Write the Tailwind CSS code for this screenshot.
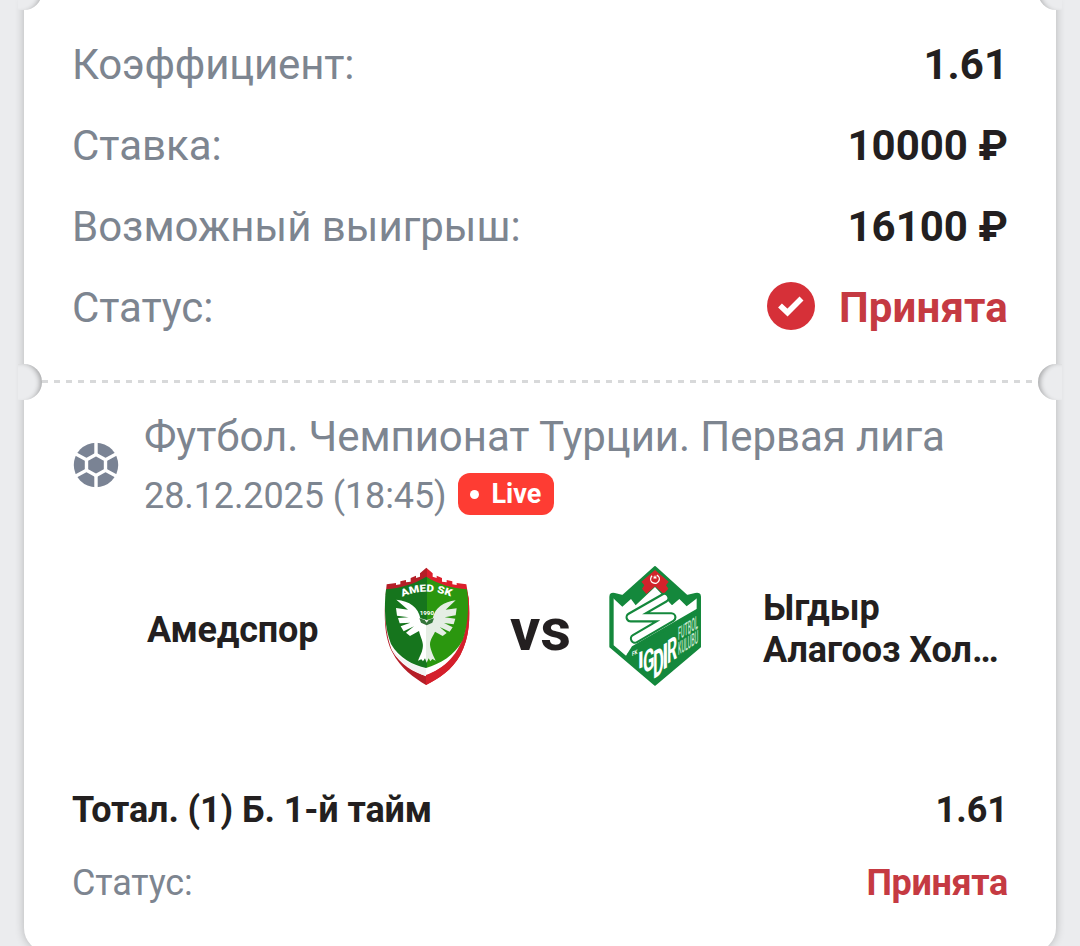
<!DOCTYPE html>
<html lang="ru">
<head>
    <meta charset="UTF-8">
    <meta name="viewport" content="width=device-width, initial-scale=1.0">
    <title>Купон</title>
    <script src="https://cdn.jsdelivr.net/npm/@tailwindcss/browser@4"></script>
</head>
<body class="bg-[#ebecee] font-[Roboto,sans-serif] text-[#231f20] h-[946px] overflow-hidden">
    <main class="relative mx-6 h-[952px] bg-white rounded-b-3xl shadow-[0_0_10px_rgba(0,0,0,0.24)]">
        <!-- Ticket notches -->
        <div class="absolute -left-1.5 -top-[26px] w-6 h-9 overflow-hidden">
            <div class="-ml-10 w-16 h-9 rounded-full bg-[#ebecee] shadow-[inset_-5px_0_5px_-3px_rgba(0,0,0,0.24)]"></div>
        </div>
        <div class="absolute -right-1.5 -top-[26px] w-6 h-9 overflow-hidden">
            <div class="w-16 h-9 rounded-full bg-[#ebecee] shadow-[inset_5px_0_5px_-3px_rgba(0,0,0,0.24)]"></div>
        </div>
        <div class="absolute -left-1.5 top-[364px] w-6 h-9 overflow-hidden">
            <div class="-ml-10 w-16 h-9 rounded-full bg-[#ebecee] shadow-[inset_-5px_1px_5px_-3px_rgba(0,0,0,0.3)]"></div>
        </div>
        <div class="absolute -right-1.5 top-[364px] w-6 h-9 overflow-hidden">
            <div class="w-16 h-9 rounded-full bg-[#ebecee] shadow-[inset_5px_1px_5px_-3px_rgba(0,0,0,0.3)]"></div>
        </div>

        <!-- Summary -->
        <section class="px-12 pt-6 text-[42px] leading-[81px]">
            <div class="flex justify-between">
                <span class="text-[#7d8590] tracking-[-0.15px]">Коэффициент:</span>
                <span class="font-bold">1.61</span>
            </div>
            <div class="flex justify-between">
                <span class="text-[#7d8590]">Ставка:</span>
                <span class="font-bold">10000 ₽</span>
            </div>
            <div class="flex justify-between">
                <span class="text-[#7d8590]">Возможный выигрыш:</span>
                <span class="font-bold">16100 ₽</span>
            </div>
            <div class="flex justify-between">
                <span class="text-[#7d8590] tracking-[-0.1px]">Статус:</span>
                <span class="flex items-center gap-6 font-bold text-[#c53a42]">
                    <svg class="size-12 -mt-1" viewBox="0 0 48 48">
                        <circle cx="24" cy="24" r="24" fill="#d63038"/>
                        <path d="M13 23.500l7.500 7L34.500 16.500" fill="none" stroke="#fff" stroke-width="5.600"/>
                    </svg>
                    <span class="tracking-[0.15px]">Принята</span>
                </span>
            </div>
        </section>

        <!-- Tear line -->
        <div class="mt-[32px] mx-[18px] h-[3px] bg-[repeating-linear-gradient(90deg,#d8d9da_0_6px,transparent_6px_12px)]"></div>

        <!-- Event -->
        <section class="px-12 pt-[27px] text-[#7d8590]">
            <div class="flex items-start gap-6">
                <svg class="size-12 shrink-0 mt-[31px]" viewBox="0 0 48 48">
                    <circle cx="24" cy="24" r="22.200" fill="#7a8394"/>
                    <g fill="none" stroke="#fff" stroke-width="3.400">
                        <path d="M24 13.500L33.500 18.800V29.200L24 34.500L14.500 29.200V18.800Z"/>
                        <path d="M24 0V13.500M24 34.500V48M33.500 18.800L46 12M33.500 29.200L46 36M14.500 18.800L2 12M14.500 29.200L2 36"/>
                    </g>
                </svg>
                <div>
                    <div class="text-[42px] leading-[54px] whitespace-nowrap tracking-[-0.07px]">Футбол. Чемпионат Турции. Первая лига</div>
                    <div class="flex items-center h-[64px] text-[36px]">
                        <span class="tracking-[-0.1px]">28.12.2025 (18:45)</span>
                        <span class="ml-3 -mt-1 flex items-center gap-3 w-24 h-[42px] pl-3 rounded-xl bg-[#fe3c33] text-white text-[27px] leading-none font-bold">
                            <i class="size-[9px] rounded-full bg-white"></i>Live
                        </span>
                    </div>
                </div>
            </div>
        </section>

        <!-- Teams -->
        <section class="flex items-center h-[140px] mt-[27px] px-12 text-[36px] leading-[42px] font-bold">
            <div class="w-[298px] pl-[75px] pt-2.5 tracking-[-0.2px]">Амедспор</div>
            <svg class="w-[115px] h-[140px] shrink-0" viewBox="0 0 345 420">
                <defs>
                    <linearGradient id="red" x1="0" x2="1"><stop offset=".5" stop-color="#b51e27"/><stop offset=".5" stop-color="#dc1f2c"/></linearGradient>
                    <linearGradient id="green" x1="0" x2="1"><stop offset=".5" stop-color="#16751d"/><stop offset=".5" stop-color="#2b970f"/></linearGradient>
                    <linearGradient id="wing" x1="0" x2="1"><stop offset=".5" stop-color="#fff"/><stop offset=".5" stop-color="#e5eee4"/></linearGradient>
                    <path id="arc" d="M97 126Q170 94 245 126"/>
                </defs>
                <path fill="url(#red)" d="M169 38L188 55V65L200 69V62L216 69V80L230 82V75L247 79V88L260 90V84L289 88L296 130C300 190 300 245 271 300C247 345 205 371 168 390C132 369 91 340 67 292C42 243 40 180 50 88L78 84V90L91 88V79L108 75V82L122 80V69L138 62V69L150 65V55z"/>
                <path fill="#fff" d="M46 120C43 190 48 240 65 284C90 330 132 352 168 363C207 344 251 320 276 270C290 220 293 170 290 120z"/>
                <path fill="#f3f3f3" d="M62 276C84 312 130 331 168 341V364C130 349 80 320 62 276z"/>
                <path fill="#d41f2b" d="M168 360C222 342 269 300 287 220C294 170 292 130 290 105L296 130C300 190 300 245 271 300C247 345 205 371 168 390z"/>
                <path fill="url(#green)" d="M169 65C132 87 92 99 48 103C41 158 45 223 63 267C87 309 130 331 168 339C210 327 253 303 278 256C294 210 298 155 291 103C248 99 209 90 169 65z"/>
                <path fill="url(#wing)" d="M151 190C145 157 119 138 79 134L114 164L78 159L81 182L116 187L84 189L89 205L121 203L92 214L101 229L132 214L108 233L120 243L147 228C151 247 162 262 158 280C156 295 148 305 144 317L154 313L159 319L165 310L170 323L176 310L181 319L187 312L197 317C187 296 180 280 180 268C180 254 189 244 195 230L218 243L230 234L209 216L239 230L248 217L222 204L251 208L256 191L224 187L257 181L260 160L227 164L257 136C222 141 195 157 188 190L170 195z"/>
                <path fill="#35753a" d="M148 190l16 5l6 8l6-8l16-5l-5 13l-17 8l-17-8z"/>
                <text font-size="30" font-weight="900" fill="#fff"><textPath href="#arc" textLength="150" lengthAdjust="spacingAndGlyphs">AMED SK</textPath></text>
                <text x="149" y="181" font-size="14" fill="#fff" textLength="43" lengthAdjust="spacingAndGlyphs">1990</text>
            </svg>
            <div class="w-[110px] text-center text-[60px] pt-2.5 pl-px">vs</div>
            <svg class="w-[120px] h-[140px] shrink-0" viewBox="0 0 360 420">
                <path fill="#14883c" stroke="#14883c" stroke-width="6" stroke-linejoin="round" d="M180 36L276 123L301 117Q315 114 315 125V275L180 389L46 275V125Q46 114 59 117L83 123z"/>
                <path fill="#fff" d="M53 128L82 155L108 132L122 151L180 96L231 151L253 132L275 154L306 130V161L111 274L92 304L53 270z"/>
                <path fill="#d2232b" d="M180 45L221 80L213 91L220 101L206 117L180 94L154 117L141 101L148 91L139 80z"/>
                <circle cx="180" cy="72" r="13" fill="none" stroke="#fff" stroke-width="4" stroke-dasharray="65 17" transform="rotate(-65 180 72)"/>
                <path fill="#fff" d="M180 60l2 5h5l-4 3l2 5l-5-3l-5 3l2-5l-4-3h5z"/>
                <path fill="#14883c" d="M97 296L315 165V275L180 389z"/>
                <g fill="none" stroke-linejoin="round" stroke-linecap="round">
                    <path stroke="#14883c" stroke-width="31" d="M208 129L107 187H229L120 251"/>
                    <path stroke="#fff" stroke-width="18" d="M208 129L107 187H229L120 251"/>
                </g>
                <path fill="none" stroke="#14883c" stroke-width="10" d="M51 122V273L180 383L310 273V122"/>
                <!-- Club name grows towards the tip of the shield -->
                <g font-size="70" font-weight="700" fill="#fff">
                    <text transform="matrix(.9 -.4 0 .98 128 343)">I</text>
                    <text transform="matrix(.72 -.4 0 1.3 144 357)">G</text>
                    <text transform="matrix(.72 -.45 0 1.65 174 373)">D</text>
                    <text transform="matrix(.9 -.5 0 1.5 202 345)">I</text>
                    <text transform="matrix(.68 -.42 0 1.4 216 327)">R</text>
                </g>
                <g fill="#c4e5ce" font-weight="500" font-size="54">
                    <text transform="matrix(.3 -.19 0 1 249 256)">FUTBOL</text>
                    <text transform="matrix(.3 -.19 0 1 249 301)">KULÜBÜ</text>
                </g>
                <text transform="matrix(1 -.5 0 1 111 304)" font-size="18" fill="#fff" textLength="16" lengthAdjust="spacingAndGlyphs">FK</text>
            </svg>
            <div class="pl-12 whitespace-nowrap pt-2 tracking-[-0.1px]">Ыгдыр<br>Алагооз Хол…</div>
        </section>

        <!-- Outcome -->
        <section class="px-12 pt-[79px] text-[36px] leading-[73px]">
            <div class="flex justify-between font-bold">
                <span class="tracking-[-0.1px]">Тотал. (1) Б. 1-й тайм</span>
                <span>1.61</span>
            </div>
            <div class="flex justify-between">
                <span class="text-[#7d8590] tracking-[-0.15px]">Статус:</span>
                <span class="font-bold text-[#c53a42] tracking-[-0.35px]">Принята</span>
            </div>
        </section>
    </main>
</body>
</html>
